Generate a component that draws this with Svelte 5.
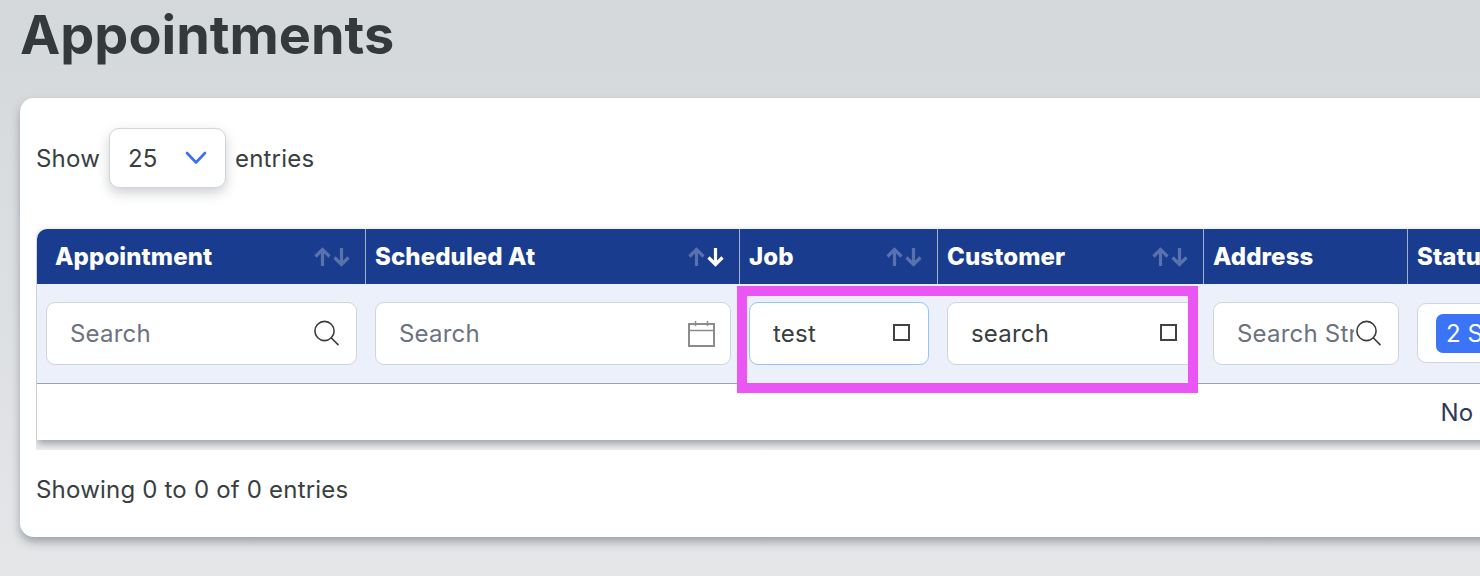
<script lang="ts">
	const columns = [
		{ label: 'Appointment', width: 329, sort: 'none' },
		{ label: 'Scheduled At', width: 374, sort: 'desc' },
		{ label: 'Job', width: 198, sort: 'none' },
		{ label: 'Customer', width: 266, sort: 'none' },
		{ label: 'Address', width: 204, sort: null },
		{ label: 'Status', width: 260, sort: null },
		{ label: '', width: 1491, sort: null },
	];
</script>

{#snippet searchIcon()}
	<svg class="icon search-icon" width="26" height="26" viewBox="0 0 26 26" fill="none" stroke="#3a3d40" stroke-width="1.6">
		<circle cx="11.5" cy="11" r="9.6" />
		<path d="M18.4 18 L25 24.6" stroke-linecap="round" />
	</svg>
{/snippet}

{#snippet clearBox()}
	<span class="clear-box"></span>
{/snippet}

<div class="page">
	<h1 class="title">Appointments</h1>

	<section class="card">
		<div class="length">
			<span class="length-label">Show</span>
			<div class="length-select">
				<span>25</span>
				<svg width="22" height="14" viewBox="0 0 22 14" fill="none" stroke="#3b6ff5" stroke-width="2.6" stroke-linecap="round" stroke-linejoin="round">
					<path d="M2 2 L11 11.5 L20 2" />
				</svg>
			</div>
			<span>entries</span>
		</div>

		<div class="table-clip">
			<div class="table-box">
				<table>
					<colgroup>
						{#each columns as col}
							<col style="width: {col.width}px" />
						{/each}
					</colgroup>
					<thead>
						<tr class="head-row">
							{#each columns as col}
								<th>
									<div class="th-inner">
										<span>{col.label}</span>
										{#if col.sort}
											<svg width="36" height="20" viewBox="0 0 36 20" fill="none" stroke="#fff" stroke-width="3.2">
												<path class:dim={true} d="M8.5 19 V3 M1.5 9.5 L8.5 2.5 L15.5 9.5" />
												<path class:dim={col.sort !== 'desc'} d="M27.5 1 V17 M20.5 10.5 L27.5 17.5 L34.5 10.5" />
											</svg>
										{/if}
									</div>
								</th>
							{/each}
						</tr>
						<tr class="filter-row">
							<td>
								<div class="field">
									<input type="text" placeholder="Search" />
									{@render searchIcon()}
								</div>
							</td>
							<td>
								<div class="field">
									<input type="text" placeholder="Search" />
									<svg class="icon cal-icon" width="28" height="27" viewBox="0 0 28 27" fill="none" stroke="#8a8c8e" stroke-width="2">
										<rect x="1" y="4" width="25" height="22" />
										<path d="M1 10.5 H26 M7.5 1 V6 M19.5 1 V6" stroke-width="1.5" />
									</svg>
								</div>
							</td>
							<td>
								<div class="field">
									<input class="focused" type="text" value="test" />
									{@render clearBox()}
								</div>
							</td>
							<td class="customer">
								<div class="field">
									<input type="text" value="search" />
									{@render clearBox()}
								</div>
							</td>
							<td>
								<div class="field">
									<input type="text" placeholder="Search Street" />
									{@render searchIcon()}
								</div>
							</td>
							<td>
								<div class="status-select">
									<span class="badge">2 Selected</span>
								</div>
							</td>
							<td></td>
						</tr>
					</thead>
					<tbody>
						<tr>
							<td class="empty" colspan={columns.length}>No matching records found</td>
						</tr>
					</tbody>
				</table>
			</div>
		</div>

		<p class="info">Showing 0 to 0 of 0 entries</p>
	</section>

	<div class="highlight"></div>
</div>

<style>
	:global(html),
	:global(body) {
		overflow: hidden;
	}
	:global(body) {
		margin: 0;
		height: 576px;
		background: linear-gradient(#d5d8db, #e4e6e8);
		font-family: Inter, 'Liberation Sans', sans-serif;
		letter-spacing: 0.2px;
		color: #393e41;
	}
	.page {
		position: relative;
		padding-left: 20px;
		height: 576px;
	}
	.title {
		margin: 0 0 28px;
		font-size: 54px;
		line-height: 70px;
		font-weight: 700;
		letter-spacing: 0;
		color: #343a3c;
	}
	.card {
		box-sizing: border-box;
		width: 3156px;
		height: 439px;
		padding: 30px 17px 0;
		background: #fff;
		border-radius: 14px;
		box-shadow: 0 5px 9px rgba(90, 100, 112, 0.5);
	}
	.length {
		display: flex;
		align-items: center;
		font-size: 24px;
		height: 60px;
	}
	.length-label {
		width: 72px;
		margin-left: -1px;
		flex: none;
	}
	.length-select {
		box-sizing: border-box;
		width: 117px;
		height: 60px;
		margin: 0 9px 0 1px;
		display: flex;
		align-items: center;
		justify-content: space-between;
		padding: 0 18px;
		background: #fff;
		border: 1px solid #d1d5db;
		border-radius: 10px;
		box-shadow: 0 5px 12px rgba(90, 100, 112, 0.3);
	}
	.table-clip {
		overflow: hidden;
		margin: 31px 0 0 -1px;
		padding: 10px 0 10px 1px;
		background: linear-gradient(#fff, #f1f2f3);
	}
	.table-box {
		width: 3122px;
		border-radius: 10px 0 0 0;
		background: #fff;
		box-shadow: 0 4px 8px rgba(80, 90, 105, 0.55);
	}
	table {
		width: 3122px;
		table-layout: fixed;
		border-collapse: separate;
		border-spacing: 0;
		font-size: 24px;
	}
	.head-row th {
		box-sizing: border-box;
		height: 55px;
		padding: 0 15px 0 9px;
		background: #1a3c8f;
		border-right: 1px solid #a4b0cc;
		color: #fff;
		font-weight: 800;
		letter-spacing: 0.1px;
		text-align: left;
	}
	.head-row th:first-child {
		padding-left: 18px;
		border-top-left-radius: 10px;
	}
	.head-row th:last-child {
		border-right: 0;
	}
	.th-inner {
		display: flex;
		align-items: center;
		justify-content: space-between;
		white-space: nowrap;
	}
	.dim {
		opacity: 0.28;
	}
	.filter-row td {
		box-sizing: border-box;
		height: 100px;
		padding: 18px 9px 18px 9px;
		background: #ebf0fb;
		border-bottom: 1px solid #9ca3af;
		vertical-align: top;
	}
	.filter-row td.customer {
		padding-right: 8px;
	}
	.field {
		position: relative;
		height: 63px;
	}
	.field input {
		box-sizing: border-box;
		display: block;
		width: 100%;
		height: 63px;
		padding: 0 44px 0 23px;
		background: #fff;
		border: 1px solid #d1d5db;
		border-radius: 9px;
		outline: none;
		font-family: inherit;
		font-size: 24px;
		letter-spacing: 0.2px;
		color: #393e41;
	}
	.field input::placeholder {
		color: #6b7280;
		opacity: 1;
	}
	.field input.focused {
		border-color: #93c5fd;
	}
	.icon {
		position: absolute;
		display: block;
	}
	.search-icon {
		top: 18px;
		right: 18px;
	}
	.cal-icon {
		top: 18px;
		right: 15px;
	}
	.clear-box {
		position: absolute;
		top: 22px;
		right: 19px;
		box-sizing: border-box;
		width: 17px;
		height: 17px;
		border: 2px solid #3f4345;
	}
	.status-select {
		box-sizing: border-box;
		height: 60px;
		display: flex;
		align-items: center;
		padding-left: 18px;
		margin-top: 1px;
		background: #fff;
		border: 1px solid #d1d5db;
		border-radius: 9px;
	}
	.badge {
		height: 39px;
		display: flex;
		align-items: center;
		padding: 0 10px;
		background: #3b74f6;
		border-radius: 7px;
		color: #fff;
		letter-spacing: 0;
		white-space: nowrap;
	}
	.empty {
		box-sizing: border-box;
		height: 56px;
		text-align: center;
		color: #2d3a55;
		background: #fff;
	}
	.info {
		margin: 0 0 0 -1px;
		padding-top: 25px;
		font-size: 24px;
		line-height: 30px;
	}
	.highlight {
		position: absolute;
		box-sizing: border-box;
		left: 737px;
		top: 286px;
		width: 461px;
		height: 107px;
		border: 10px solid #eb55f4;
		pointer-events: none;
	}
</style>
